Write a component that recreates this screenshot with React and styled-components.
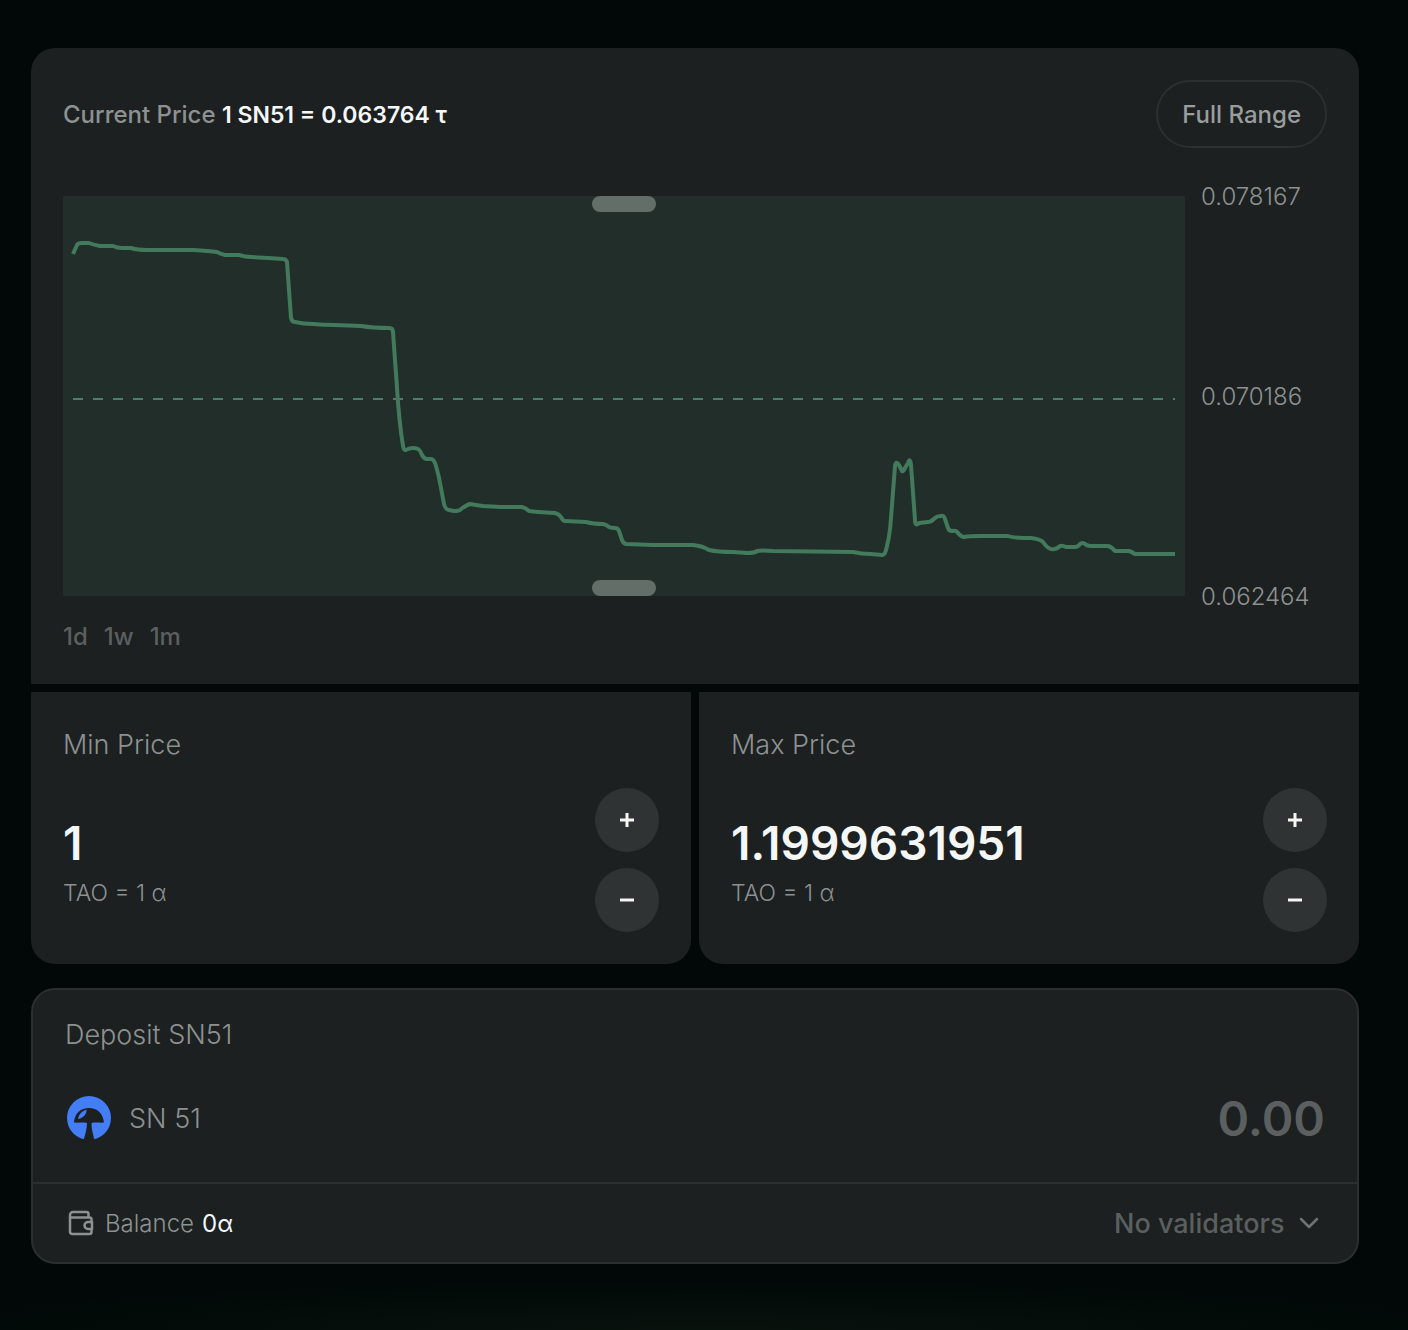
import { useState } from "react";
import styled, { createGlobalStyle } from "styled-components";

const GlobalStyle = createGlobalStyle`
  * {
    box-sizing: border-box;
  }
  body {
    margin: 0;
    background-color: #010807;
    font-family: "Inter", "Liberation Sans", sans-serif;
    color: #f5f7f7;
  }
  button, input, select {
    font-family: inherit;
  }
`;

const Page = styled.main`
  min-height: 100vh;
  padding: 48px 49px 66px 31px;
  display: flex;
  flex-direction: column;
  gap: 24px;
  background: radial-gradient(ellipse 58% 50px at 50% 100%, #08120d, #010807);
`;
const PriceRange = styled.section`
  display: flex;
  flex-direction: column;
  gap: 8px;
`;
const Panel = styled.div`
  background-color: #1c2020;
  padding: 32px;
`;
const ChartPanel = styled(Panel)`
  border-radius: 24px 24px 0 0;
`;
const Header = styled.header`
  display: flex;
  align-items: center;
  justify-content: space-between;
  margin-bottom: 48px;
`;
const CurrentPrice = styled.p`
  margin: 0;
  font-size: 24px;
  font-weight: 500;
  color: #8e9191;
`;
const Strong = styled.strong`
  font-size: 23px;
  font-weight: 600;
  color: #f5f7f7;
`;
const OutlineButton = styled.button`
  height: 68px;
  padding: 0 24px;
  border: 2px solid #2c2f2f;
  border-radius: 34px;
  background: none;
  color: #9a9d9d;
  font-size: 24px;
  font-weight: 500;
  cursor: pointer;
`;
const ChartRow = styled.div`
  display: flex;
  gap: 16px;
`;
const ChartArea = styled.div`
  flex: 1;
  height: 400px;
  position: relative;
  background-color: #212e29;
`;
const ChartSvg = styled.svg`
  display: block;
  width: 100%;
  height: 100%;
`;
const Handle = styled.button`
  position: absolute;
  left: calc(50% - 32px);
  ${({ $edge }) => $edge}: 0;
  width: 64px;
  height: 16px;
  padding: 0;
  border: none;
  border-radius: 8px;
  background-color: #646e69;
  cursor: ns-resize;
`;
const Axis = styled.div`
  width: 126px;
  height: 434px;
  margin: -16px 0 -18px;
  display: flex;
  flex-direction: column;
  justify-content: space-between;
  font-size: 24px;
  line-height: 34px;
  font-weight: 300;
  color: #8e9191;
`;
const Periods = styled.div`
  display: flex;
  gap: 16px;
  margin-top: 24px;
`;
const Period = styled.button`
  height: 32px;
  padding: 0;
  border: none;
  background: none;
  color: #5b5f5f;
  font-size: 24px;
  line-height: 34px;
  font-weight: 500;
  cursor: pointer;
`;
const Limits = styled.div`
  display: grid;
  grid-template-columns: 1fr 1fr;
  gap: 8px;
`;
const LimitPanel = styled(Panel)`
  border-radius: 0 0 24px 24px;
`;
const Label = styled.label`
  display: block;
  font-size: 27px;
  line-height: 42px;
  font-weight: 300;
  color: #8e9191;
`;
const LimitBody = styled.div`
  display: flex;
  align-items: center;
  justify-content: space-between;
  gap: 24px;
  margin-top: 22px;
`;
const LimitValue = styled.div`
  flex: 1;
  min-width: 0;
`;
const Amount = styled.input`
  display: block;
  width: 100%;
  height: 64px;
  padding: 0;
  border: none;
  outline: none;
  background: none;
  color: #f5f7f7;
  font-size: 46px;
  font-weight: 600;
`;
const DepositAmount = styled(Amount)`
  font-size: 48px;
  text-align: right;
  &::placeholder {
    color: #5b5f5f;
    opacity: 1;
  }
`;
const Unit = styled.span`
  display: block;
  padding-top: 2px;
  font-size: 23px;
  line-height: 32px;
  font-weight: 300;
  color: #8e9191;
`;
const Steppers = styled.div`
  display: flex;
  flex-direction: column;
  gap: 16px;
`;
const StepButton = styled.button`
  display: flex;
  align-items: center;
  justify-content: center;
  width: 64px;
  height: 64px;
  padding: 0;
  border: none;
  border-radius: 50%;
  background-color: #303333;
  color: #f5f7f7;
  cursor: pointer;
`;
const DepositCard = styled.section`
  border: 2px solid #2c2f2f;
  border-radius: 24px;
  background-color: #1c2020;
`;
const DepositTop = styled.div`
  padding: 24px 32px 32px;
`;
const DepositRow = styled.div`
  display: flex;
  align-items: center;
  justify-content: space-between;
  margin-top: 30px;
`;
const Token = styled.div`
  display: flex;
  align-items: center;
  gap: 16px;
  font-size: 27px;
  font-weight: 300;
  color: #8e9191;
  white-space: nowrap;
`;
const DepositBottom = styled.div`
  display: flex;
  align-items: center;
  justify-content: space-between;
  height: 80px;
  padding: 0 32px;
  border-top: 2px solid #2c2f2f;
`;
const Balance = styled.div`
  display: flex;
  align-items: center;
  gap: 8px;
  font-size: 24px;
  font-weight: 300;
  color: #8e9191;
`;
const BalanceValue = styled.span`
  font-weight: 400;
  color: #f5f7f7;
`;
const SelectBox = styled.div`
  display: grid;
  align-items: center;
  justify-items: end;
  color: #5b5f5f;
  & > * {
    grid-area: 1 / 1;
  }
`;
const Select = styled.select`
  appearance: none;
  padding: 2px 40px 0 0;
  border: none;
  outline: none;
  background: none;
  color: inherit;
  font-size: 27px;
  line-height: 40px;
  font-weight: 500;
  cursor: pointer;
`;
const ChevronIcon = styled.svg`
  pointer-events: none;
  color: #6f7373;
`;

const PRICE_LINE =
  "M10 58 L14 49 Q15 47 19 47 L26 47 Q31 49 37 50 L50 50 Q54 52 59 52 L68 52 Q74 54 84 54 L130 54 Q146 55 154 56 Q158 58 162 59 L176 59 Q182 61 188 61 L205 62 L220 63 Q223 63 224 66 L228 122 Q229 126 232 126 Q240 128 250 128 Q260 129 272 129 L298 130 Q310 132 326 132 Q330 132 330 136 L334 192 Q336 225 340 250 Q341 256 345 253 Q350 251 355 253 Q357 254 359 259 Q361 263 364 263 L368 263 Q371 263 373 270 Q376 280 378 292 L381 308 Q382 313 386 314 Q393 316 397 314 Q403 309 407 308 Q412 309 420 310 L438 311 L459 311 Q463 312 466 315 Q472 316 492 317 Q496 318 498 321 Q500 325 502 325 L523 326 Q530 328 540 328 Q544 329 546 331 Q548 332 552 332 Q555 332 556 335 L559 344 Q560 347 563 348 L590 349 L630 349 Q640 350 646 354 Q655 356 670 356 L684 357 Q692 357 694 355 Q698 354 710 355 L790 356 Q798 358 808 358 L819 359 Q822 360 824 350 Q827 338 828 322 L832 270 Q833 264 836 269 L839 275 Q840 276 842 272 L845 267 Q847 261 848 269 L852 324 Q852 331 856 327 L865 326 Q868 326 872 322 Q874 320 878 320 Q881 319 882 323 L885 332 Q886 335 889 335 Q893 334 895 337 Q898 341 901 341 Q907 340 918 340 L945 340 Q950 342 968 342 Q977 343 980 346 Q984 352 988 353 Q993 354 997 350 Q999 349 1003 351 L1012 351 Q1015 351 1017 348 Q1019 346 1022 348 Q1024 350 1028 350 L1045 350 Q1049 351 1052 355 L1066 355 Q1069 356 1072 358 L1112 358";

const PlusIcon = () => (
  <svg width="16" height="16" viewBox="0 0 16 16" fill="none" stroke="currentColor" strokeWidth="3">
    <path d="M8 1v14M1 8h14" />
  </svg>
);

const MinusIcon = () => (
  <svg width="16" height="16" viewBox="0 0 16 16" fill="none" stroke="currentColor" strokeWidth="3">
    <path d="M1 8h14" />
  </svg>
);

const TokenLogo = () => (
  <svg width="48" height="48" viewBox="0 0 48 48">
    <circle cx="24" cy="24" r="22" fill="#437ef7" />
    <path
      d="M9 28.500 C9.500 19 16 14 24 14 C32 14 38 19 39 28.500 C35 29 31 28 26.500 29 C26.500 35 28 40 30 48 L18 48 C20.500 40 22 34 22 29 C18 28 13 29 9 28.500Z"
      fill="#1c2020"
    />
    <path d="M13 25 C14 20 17 17 21.500 15.500 C22 19 19 24 13 25Z" fill="#437ef7" />
  </svg>
);

const WalletIcon = () => (
  <svg width="32" height="32" viewBox="0 0 32 32" fill="none" stroke="currentColor" strokeWidth="2.5" strokeLinejoin="round">
    <path d="M23.500 10.500V7a2 2 0 0 0-2-2H8a3 3 0 0 0-3 3v16.500a2.500 2.500 0 0 0 2.500 2.500h17a2 2 0 0 0 2-2V22" />
    <path d="M5 10.500h19.500a2 2 0 0 1 2 2V15" />
    <path d="M27 15h-4a3.500 3.500 0 0 0 0 7h4z" />
  </svg>
);

const PriceLimit = ({ id, label, initial }) => {
  const [value, setValue] = useState(initial);
  const step = (amount) => setValue(String(Number(value) + amount));

  return (
    <LimitPanel>
      <Label htmlFor={id}>{label}</Label>
      <LimitBody>
        <LimitValue>
          <Amount id={id} value={value} onChange={(e) => setValue(e.target.value)} inputMode="decimal" />
          <Unit>TAO = 1 α</Unit>
        </LimitValue>
        <Steppers>
          <StepButton type="button" aria-label={`Increase ${label}`} onClick={() => step(1)}>
            <PlusIcon />
          </StepButton>
          <StepButton type="button" aria-label={`Decrease ${label}`} onClick={() => step(-1)}>
            <MinusIcon />
          </StepButton>
        </Steppers>
      </LimitBody>
    </LimitPanel>
  );
};

const App = () => {
  const [deposit, setDeposit] = useState("");

  return (
    <Page>
      <GlobalStyle />
      <PriceRange>
        <ChartPanel>
          <Header>
            <CurrentPrice>
              Current Price <Strong>1 SN51 = 0.063764 τ</Strong>
            </CurrentPrice>
            <OutlineButton type="button">Full Range</OutlineButton>
          </Header>
          <ChartRow>
            <ChartArea>
              <ChartSvg viewBox="0 0 1122 400" preserveAspectRatio="none" fill="none">
                <path d="M10 203H1112" stroke="#4d7f6c" strokeWidth="2" strokeDasharray="10 10" />
                <path d={PRICE_LINE} stroke="#437a5e" strokeWidth="4" strokeLinejoin="round" />
              </ChartSvg>
              <Handle type="button" $edge="top" aria-label="Upper bound" />
              <Handle type="button" $edge="bottom" aria-label="Lower bound" />
            </ChartArea>
            <Axis>
              <span>0.078167</span>
              <span>0.070186</span>
              <span>0.062464</span>
            </Axis>
          </ChartRow>
          <Periods>
            <Period type="button">1d</Period>
            <Period type="button">1w</Period>
            <Period type="button">1m</Period>
          </Periods>
        </ChartPanel>
        <Limits>
          <PriceLimit id="min-price" label="Min Price" initial="1" />
          <PriceLimit id="max-price" label="Max Price" initial="1.1999631951" />
        </Limits>
      </PriceRange>
      <DepositCard>
        <DepositTop>
          <Label htmlFor="deposit">Deposit SN51</Label>
          <DepositRow>
            <Token>
              <TokenLogo />
              SN 51
            </Token>
            <DepositAmount
              id="deposit"
              placeholder="0.00"
              inputMode="decimal"
              value={deposit}
              onChange={(e) => setDeposit(e.target.value)}
            />
          </DepositRow>
        </DepositTop>
        <DepositBottom>
          <Balance>
            <WalletIcon />
            <span>Balance</span>
            <BalanceValue>0α</BalanceValue>
          </Balance>
          <SelectBox>
            <Select aria-label="Validator" defaultValue="">
              <option value="">No validators</option>
            </Select>
            <ChevronIcon width="32" height="32" viewBox="0 0 32 32" fill="none" stroke="currentColor" strokeWidth="2.5" strokeLinecap="round" strokeLinejoin="round">
              <path d="M8 12l8 8 8-8" />
            </ChevronIcon>
          </SelectBox>
        </DepositBottom>
      </DepositCard>
    </Page>
  );
};

export default App;
